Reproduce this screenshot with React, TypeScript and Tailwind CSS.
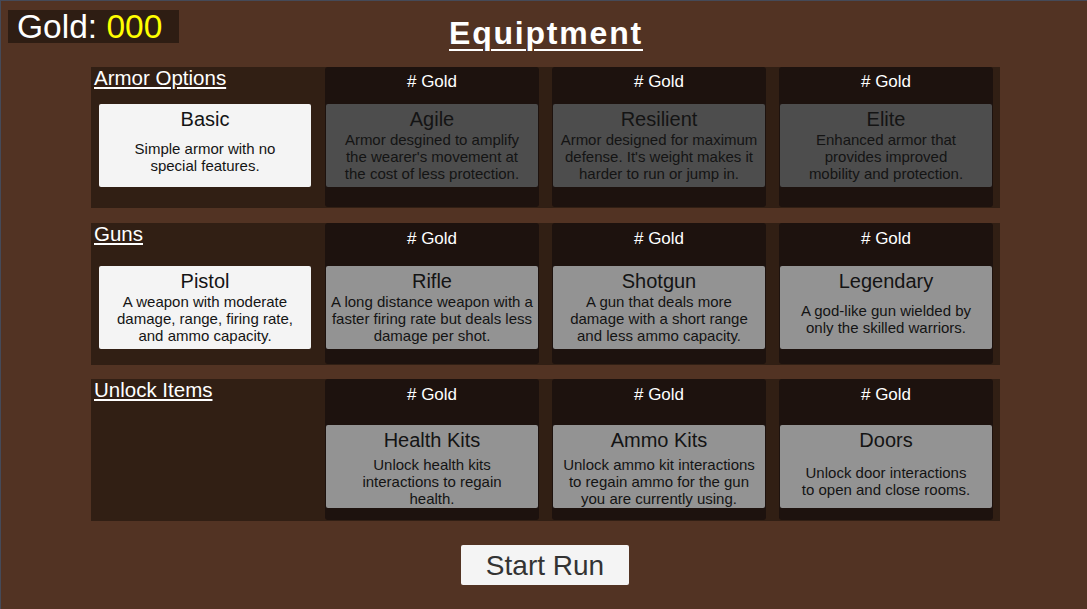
import React from "react";

type Card = { title: string; lines: string[]; tone: "white" | "dark" | "gray" };

type Section = {
  label: string;
  height: string;
  headerH: string;
  headerPt: string;
  descPad: string;
  first: Card | null;
  items: Card[];
};

const sections: Section[] = [
  {
    label: "Armor Options",
    height: "h-[141px]",
    headerH: "h-[37px]",
    headerPt: "pt-[5px]",
    descPad: "pb-[5px]",
    first: { title: "Basic", lines: ["Simple armor with no", "special features."], tone: "white" },
    items: [
      { title: "Agile", lines: ["Armor desgined to amplify", "the wearer's movement at", "the cost of less protection."], tone: "dark" },
      { title: "Resilient", lines: ["Armor designed for maximum", "defense. It's weight makes it", "harder to run or jump in."], tone: "dark" },
      { title: "Elite", lines: ["Enhanced armor that", "provides improved", "mobility and protection."], tone: "dark" },
    ],
  },
  {
    label: "Guns",
    height: "h-[142px]",
    headerH: "h-[43px]",
    headerPt: "pt-[6px]",
    descPad: "pb-[5px]",
    first: { title: "Pistol", lines: ["A weapon with moderate", "damage, range, firing rate,", "and ammo capacity."], tone: "white" },
    items: [
      { title: "Rifle", lines: ["A long distance weapon with a", "faster firing rate but deals less", "damage per shot."], tone: "gray" },
      { title: "Shotgun", lines: ["A gun that deals more", "damage with a short range", "and less ammo capacity."], tone: "gray" },
      { title: "Legendary", lines: ["A god-like gun wielded by", "only the skilled warriors."], tone: "gray" },
    ],
  },
  {
    label: "Unlock Items",
    height: "h-[142px]",
    headerH: "h-[46px]",
    headerPt: "pt-[6px]",
    descPad: "pt-[2px]",
    first: null,
    items: [
      { title: "Health Kits", lines: ["Unlock health kits", "interactions to regain", "health."], tone: "gray" },
      { title: "Ammo Kits", lines: ["Unlock ammo kit interactions", "to regain ammo for the gun", "you are currently using."], tone: "gray" },
      { title: "Doors", lines: ["Unlock door interactions", "to open and close rooms."], tone: "gray" },
    ],
  },
];

function ItemCard({ card, descPad }: { card: Card; descPad: string }) {
  const bg =
    card.tone === "white" ? "bg-[#f4f4f4]" : card.tone === "dark" ? "bg-[#4d4d4d]" : "bg-[#939393]";
  return (
    <div className={`w-[212px] h-[83px] rounded-[2px] ${bg} flex flex-col text-[#141414]`}>
      <div className="pt-[3px] text-[20px] leading-[24px] text-center">{card.title}</div>
      <div className={`flex-1 flex flex-col justify-center text-center text-[15px] leading-[17px] ${descPad}`}>
        {card.lines.map((l, i) => (
          <div key={i} className="whitespace-nowrap">{l}</div>
        ))}
      </div>
    </div>
  );
}

export default function App() {
  return (
    <div
      className="w-[1087px] h-[609px] bg-[#523323] overflow-hidden shadow-[inset_1px_1px_0_#454a58] flex flex-col"
      style={{ fontFamily: '"Liberation Sans", Arial, sans-serif' }}
    >
      <div className="h-[67px] grid grid-cols-[1fr_auto_1fr]">
        <div className="self-start ml-[8px] mt-[10px] w-[171px] h-[33px] bg-[#2e1d13] flex items-center pl-[9px] text-[33.5px] leading-[33px] text-white whitespace-nowrap">
          Gold:&nbsp;<span className="text-[#ffff00]">000</span>
        </div>
        <div className="mt-[14px] pl-[5px] text-[32px] leading-[38px] font-bold tracking-[1.8px] text-white underline decoration-2 underline-offset-[5px]">
          Equiptment
        </div>
        <div />
      </div>

      <div className="ml-[91px] w-[909px] flex flex-col gap-[15px]">
        {sections.map((s, si) => (
          <div key={si} className={`${s.height} bg-[#311f14] flex pr-[7px] ${si === 2 ? "-mt-[1px]" : ""}`}>
            <div className="w-[234px] flex flex-col">
              <div className={`${s.headerH} pl-[3px]`}>
                <span className="text-white text-[20.5px] leading-[22px] underline decoration-[1.5px] underline-offset-[2px]">
                  {s.label}
                </span>
              </div>
              {s.first && (
                <div className="pl-[8px]">
                  <ItemCard card={s.first} descPad={s.descPad} />
                </div>
              )}
            </div>
            <div className="flex gap-[13px] pb-[1px]">
              {s.items.map((c, ci) => (
                <div key={ci} className="w-[214px] h-full bg-[#1d120e] rounded-[3px] flex flex-col px-[1px]">
                  <div className={`${s.headerH} ${s.headerPt} text-center text-white text-[17px] leading-[20px]`}>
                    # Gold
                  </div>
                  <ItemCard card={c} descPad={s.descPad} />
                </div>
              ))}
            </div>
          </div>
        ))}
      </div>

      <div className="mt-[24px] flex justify-center pl-[3px]">
        <div className="w-[168px] h-[40px] bg-[#f4f4f4] rounded-[2px] flex items-center justify-center pt-[2px] text-[28px] leading-[32px] text-[#333333]">
          Start Run
        </div>
      </div>
    </div>
  );
}
